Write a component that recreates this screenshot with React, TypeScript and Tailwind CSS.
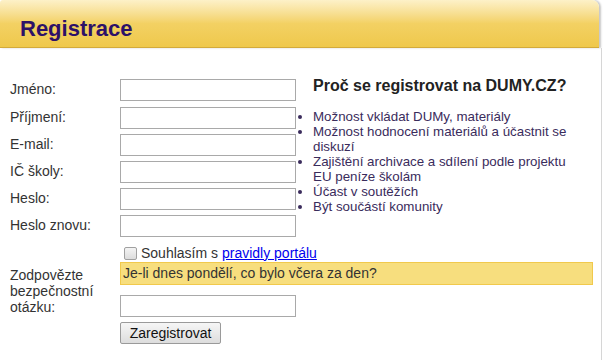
import React from "react";

const inputCls = "block w-[176px] h-[22px] border border-[#a9a9a9] bg-white";

function Row({ label, mt }: { label: string; mt?: string }) {
  return (
    <div className={`flex items-center h-[22px] ${mt ?? ""}`}>
      <div className="w-[110px] text-[14px] leading-[16px] text-[#333] -mt-[2px]">{label}</div>
      <input className={inputCls} />
    </div>
  );
}

export default function App() {
  return (
    <div
      className="w-[604px] h-[360px] bg-white overflow-hidden"
      style={{ fontFamily: '"Liberation Sans", Arial, sans-serif' }}
    >
      <div className="w-[599px] h-[48px] rounded-tr-[7px] rounded-tl-[3px] bg-gradient-to-b from-[#fdf1c8] via-[#f3d163] via-50% to-[#efc84b] border-b border-[#d3aa3a] shadow-[2px_0_2px_rgba(0,0,0,0.22)] flex items-center pl-[20px]">
        <h1 className="text-[22px] font-bold text-[#2d1168] leading-none mt-[11px]">Registrace</h1>
      </div>
      <div className="w-[602px] h-[312px] border-r border-[#d6d6d6] pl-[10px] pt-[31px]">
        <div className="flex">
          <div className="w-[291px] flex flex-col">
            <Row label="Jméno:" />
            <Row label="Příjmení:" mt="mt-[6px]" />
            <Row label="E-mail:" mt="mt-[5px]" />
            <Row label="IČ školy:" mt="mt-[5px]" />
            <Row label="Heslo:" mt="mt-[5px]" />
            <Row label="Heslo znovu:" mt="mt-[5px]" />
          </div>
          <div className="pl-[12px] -mt-[3px]">
            <h2 className="text-[16px] font-bold text-[#222] leading-[19px]">
              Proč se registrovat na DUMY.CZ?
            </h2>
            <ul className="list-disc mt-[14px] text-[13.33px] leading-[15px] text-[#3a2c5c] w-[262px]">
              <li>Možnost vkládat DUMy, materiály</li>
              <li>Možnost hodnocení materiálů a účastnit se diskuzí</li>
              <li>Zajištění archivace a sdílení podle projektu EU peníze školám</li>
              <li>Účast v soutěžích</li>
              <li>Být součástí komunity</li>
            </ul>
          </div>
        </div>
        <div className="flex items-center ml-[114px] mt-[8px] h-[16px] text-[14px] text-[#333]">
          <span className="w-[13px] h-[13px] border border-[#a0a0a0] rounded-[2px] bg-gradient-to-b from-[#f4f4f4] to-[#dcdcdc] mr-[4px]" />
          <span>
            Souhlasím s{" "}
            <a className="text-[#0000ee] underline" href="#">
              pravidly portálu
            </a>
          </span>
        </div>
        <div className="flex items-center mt-[1px]">
          <div className="w-[110px] text-[14px] leading-[16px] text-[#333] mt-[2px]">
            Zodpovězte bezpečnostní otázku:
          </div>
          <div className="flex flex-col">
            <div className="w-[473px] h-[23px] bg-[#f7de7e] border border-[#f1c94c] text-[14px] text-[#333] leading-[21px] pl-[2px]">
              Je-li dnes pondělí, co bylo včera za den?
            </div>
            <input className={`${inputCls} mt-[10px]`} />
          </div>
        </div>
        <div className="ml-[110px] mt-[4px]">
          <button className="h-[22px] w-[101px] border border-[#9a9a9a] rounded-[2px] bg-gradient-to-b from-[#f6f6f6] to-[#dddddd] text-[14px] text-[#111] leading-[18px]">
            Zaregistrovat
          </button>
        </div>
      </div>
    </div>
  );
}
